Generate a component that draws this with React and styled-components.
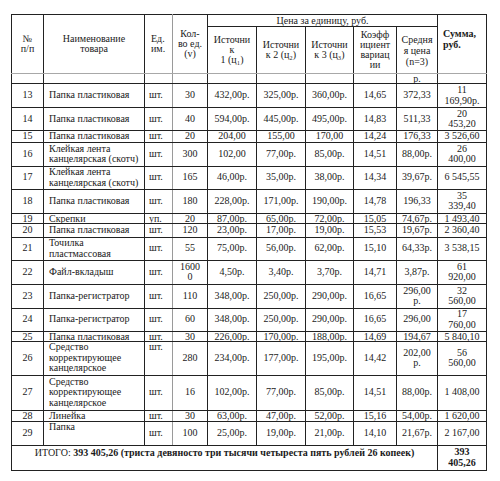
import React from "react";
import styled, { createGlobalStyle } from "styled-components";

const Global = createGlobalStyle`
  html, body { margin: 0; padding: 0; background: #ffffff; }
  body { font-family: "Liberation Serif", "Times New Roman", serif; color: #1f1f1f; }
`;

const Page = styled.div`
  padding: 14px 0 0 11px;
  width: 500px;
  height: 481px;
  box-sizing: border-box;
`;

const Table = styled.table`
  border-collapse: collapse;
  table-layout: fixed;
  width: 475px;
  font-family: "Liberation Serif", "Times New Roman", serif;
  font-size: 10px;
  line-height: 10px;
  color: #1a1a1a;
  border: 1px solid #1a1a1a;
`;

const Row = styled.tr`
  height: ${(p) => p.$h}px;
`;

const Cell = styled.td`
  border: 1px solid ${(p) => (p.$grey ? "#9a9a9a" : "#222")};
  ${(p) => p.$greyRight && "border-right-color: #9a9a9a;"}
  ${(p) => p.$greyBottom && "border-bottom-color: #a8a8a8;"}
  padding: ${(p) => p.$pad || "0 2px"};
  text-align: ${(p) => p.$align || "center"};
  vertical-align: ${(p) => p.$valign || "middle"};
  font-weight: ${(p) => (p.$bold ? 700 : 400)};
  white-space: pre;
  line-height: ${(p) => p.$lh || 10.5}px;
  overflow: visible;
`;

const Head = styled(Cell).attrs({ as: "th" })`
  font-weight: ${(p) => (p.$bold ? 700 : 400)};
  line-height: ${(p) => p.$lh || 10}px;
`;

const Strong = styled.b`
  font-weight: 700;
`;

const widths = [32, 101, 28, 35, 49, 49, 48, 43, 41, 49];

const rows = [
  { n: "13", name: "Папка пластиковая", u: "шт.", q: "30", p1: "432,00р.", p2: "325,00р.", p3: "360,00р.", k: "14,65", a: "372,33", s: "11\n169,90р.", h: 24 },
  { n: "14", name: "Папка пластиковая", u: "шт.", q: "40", p1: "594,00р.", p2: "445,00р.", p3: "495,00р.", k: "14,83", a: "511,33", s: "20\n453,20", h: 23 },
  { n: "15", name: "Папка пластиковая", u: "шт.", q: "20", p1: "204,00", p2: "155,00", p3: "170,00", k: "14,24", a: "176,33", s: "3 526,60", h: 11 },
  { n: "16", name: "Клейкая лента\nканцелярская (скотч)", u: "шт.", q: "300", p1: "102,00", p2: "77,00р.", p3: "85,00р.", k: "14,51", a: "88,00р.", s: "26\n400,00", h: 24 },
  { n: "17", name: "Клейкая лента\nканцелярская (скотч)", u: "шт.", q: "165", p1: "46,00р.", p2: "35,00р.", p3: "38,00р.", k: "14,34", a: "39,67р.", s: "6 545,55", h: 23 },
  { n: "18", name: "Папка пластиковая", u: "шт.", q: "180", p1: "228,00р.", p2: "171,00р.", p3: "190,00р.", k: "14,78", a: "196,33", s: "35\n339,40", h: 24 },
  { n: "19", name: "Скрепки", u: "уп.", q: "20", p1: "87,00р.", p2: "65,00р.", p3: "72,00р.", k: "15,05", a: "74,67р.", s: "1 493,40", h: 9, tight: true },
  { n: "20", name: "Папка пластиковая", u: "шт.", q: "120", p1: "23,00р.", p2: "17,00р.", p3: "19,00р.", k: "15,53", a: "19,67р.", s: "2 360,40", h: 14 },
  { n: "21", name: "Точилка\nпластмассовая", u: "шт.", q: "55", p1: "75,00р.", p2: "56,00р.", p3: "62,00р.", k: "15,10", a: "64,33р.", s: "3 538,15", h: 23 },
  { n: "22", name: "Файл-вкладыш", u: "шт.", q: "1600\n0", p1: "4,50р.", p2: "3,40р.", p3: "3,70р.", k: "14,71", a: "3,87р.", s: "61\n920,00", h: 24 },
  { n: "23", name: "Папка-регистратор", u: "шт.", q: "110", p1: "348,00р.", p2: "250,00р.", p3: "290,00р.", k: "16,65", a: "296,00\nр.", s: "32\n560,00", h: 24 },
  { n: "24", name: "Папка-регистратор", u: "шт.", q: "60", p1: "348,00р.", p2: "250,00р.", p3: "290,00р.", k: "16,65", a: "296,00", s: "17\n760,00", h: 23 },
  { n: "25", name: "Папка пластиковая", u: "шт.", q: "30", p1: "226,00р.", p2: "170,00р.", p3: "188,00р.", k: "14,69", a: "194,67", s: "5 840,10", h: 9, tight: true },
  { n: "26", name: "Средство\nкорректирующее\nканцелярское", u: "шт.", uTop: true, q: "280", p1: "234,00р.", p2: "177,00р.", p3: "195,00р.", k: "14,42", a: "202,00\nр.", s: "56\n560,00", h: 34 },
  { n: "27", name: "Средство\nкорректирующее\nканцелярское", u: "шт.", q: "16", p1: "102,00р.", p2: "77,00р.", p3: "85,00р.", k: "14,51", a: "88,00р.", s: "1 408,00", h: 35 },
  { n: "28", name: "Линейка", u: "шт.", q: "30", p1: "63,00р.", p2: "47,00р.", p3: "52,00р.", k: "15,16", a: "54,00р.", s: "1 620,00", h: 11 },
  { n: "29", name: "Папка", nameTop: true, u: "шт.", q: "100", p1: "25,00р.", p2: "19,00р.", p3: "21,00р.", k: "14,10", a: "21,67р.", s: "2 167,00", h: 24 },
];

function DataRow({ r }) {
  const lh = r.tight ? 9 : undefined;
  return (
    <Row $h={r.h}>
      <Cell $lh={lh}>{r.n}</Cell>
      <Cell $lh={lh} $align="left" $pad="0 2px 0 5px" $valign={r.nameTop ? "top" : "middle"}>
        {r.name}
      </Cell>
      <Cell $lh={lh} $align="left" $pad="0 1px 0 4px" $greyRight $valign={r.uTop ? "top" : "middle"}>
        {r.u}
      </Cell>
      <Cell $lh={lh}>{r.q}</Cell>
      <Cell $lh={lh}>{r.p1}</Cell>
      <Cell $lh={lh}>{r.p2}</Cell>
      <Cell $lh={lh}>{r.p3}</Cell>
      <Cell $lh={lh}>{r.k}</Cell>
      <Cell $lh={lh}>{r.a}</Cell>
      <Cell $lh={lh}>{r.s}</Cell>
    </Row>
  );
}

export default function App() {
  return (
    <Page>
      <Global />
      <Table>
        <colgroup>
          {widths.map((w, i) => (
            <col key={i} style={{ width: w }} />
          ))}
        </colgroup>
        <thead>
          <Row $h={12}>
            <Head rowSpan={2} $greyBottom>{"№\nп/п"}</Head>
            <Head rowSpan={2} $greyBottom>{"Наименование\nтовара"}</Head>
            <Head rowSpan={2} $greyBottom $greyRight $align="left" $pad="0 1px 0 6px">{"Ед.\nим."}</Head>
            <Head rowSpan={2} $greyBottom>{"Кол-\nво ед.\n(v)"}</Head>
            <Head colSpan={5}>Цена за единицу, руб.</Head>
            <Head rowSpan={2} $greyBottom $bold $align="left" $valign="top" $pad="13px 2px 0 5px" $lh={11}>
              {"Сумма,\nруб."}
            </Head>
          </Row>
          <Row $h={47}>
            <Head $greyBottom>{"Источни\nк\n1 (ц₁)"}</Head>
            <Head $greyBottom>{"Источни\nк 2 (ц₂)"}</Head>
            <Head $greyBottom>{"Источни\nк 3 (ц₃)"}</Head>
            <Head $greyBottom $lh={10}>{"Коэфф\nициент\nвариац\nии"}</Head>
            <Head $greyBottom $lh={11}>{"Средня\nя цена\n(n=3)"}</Head>
          </Row>
        </thead>
        <tbody>
          <Row $h={10}>
            <Cell $lh={9} />
            <Cell $lh={9} />
            <Cell $lh={9} $greyRight />
            <Cell $lh={9} />
            <Cell $lh={9} />
            <Cell $lh={9} />
            <Cell $lh={9} />
            <Cell $lh={9} />
            <Cell $lh={9}>р.</Cell>
            <Cell $lh={9} />
          </Row>
          {rows.map((r) => (
            <DataRow key={r.n} r={r} />
          ))}
          <Row $h={25}>
            <Cell colSpan={9} $valign="top" $pad="2px 2px 0 2px">
              ИТОГО: <Strong>393 405,26 (триста девяносто три тысячи четыреста пять рублей 26 копеек)</Strong>
            </Cell>
            <Cell $bold $valign="top" $pad="1px 2px 0 2px">{"393\n405,26"}</Cell>
          </Row>
        </tbody>
      </Table>
    </Page>
  );
}
